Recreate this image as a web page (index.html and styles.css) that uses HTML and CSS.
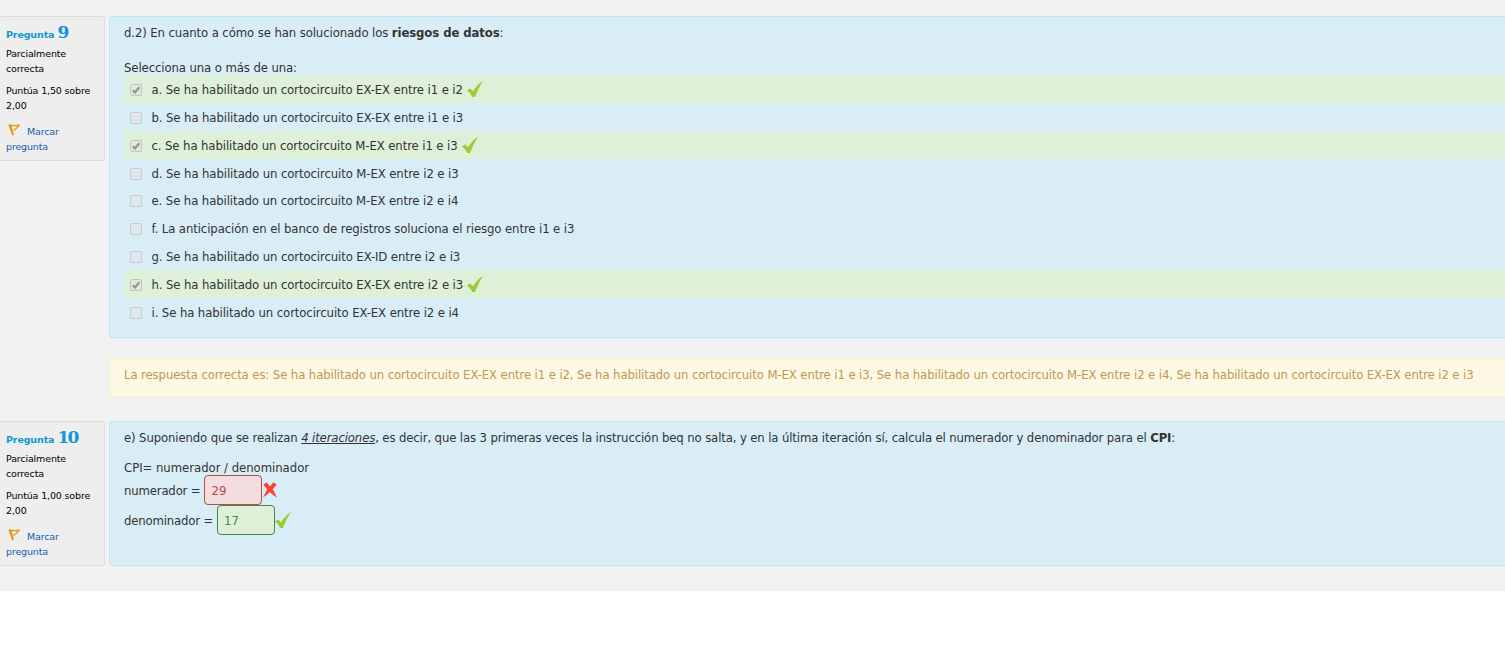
FILE: index.html
```html
<!DOCTYPE html>
<html lang="es">
<head>
<meta charset="utf-8">
<title>Revisión del cuestionario</title>
<link rel="stylesheet" href="styles.css">
</head>
<body>
<svg class="defs" width="0" height="0">
  <symbol id="tick" viewBox="0 0 16 16"><path d="M0 9.600 3 7.400 6.200 10.300Q10 3.500 15.900 0 11.500 6.500 7.900 15.900L5.500 15.900Q3.500 12 0 9.600Z" fill="#9c3"/></symbol>
  <symbol id="cross" viewBox="0 0 14 16"><path d="M.3 3 3.600.3 7 4.300 10.500.3 13.700 2.800 9.700 7.200Q12 10.500 13.800 15.700 10 13 6.800 10.200 3.800 12.700.1 15.500 2.200 10.800 4.300 7.300Z" fill="#ff4136"/></symbol>
  <symbol id="flag" viewBox="0 0 12 12"><path d="M.8 1 5.500 1.700 11 1.300 8.500 4.200 5.500 6.500M1 .8 4.800 11.300M3 1.800 5.300 11.200" fill="none" stroke="#e39a0c" stroke-width="1.300"/></symbol>
  <symbol id="mark" viewBox="0 0 10 10"><path d="M1.700 5.300 4 7.500 8.300 2.100" fill="none" stroke="#929892" stroke-width="2.200"/></symbol>
</svg>
<main class="page">
  <section class="question first">
    <aside class="info">
      <h3>Pregunta <span>9</span></h3>
      <p class="state">Parcialmente correcta</p>
      <p class="grade">Puntúa 1,50 sobre 2,00</p>
      <p class="mark"><svg class="flag"><use href="#flag"/></svg>Marcar pregunta</p>
    </aside>
    <div class="content">
      <div class="formulation">
        <p>d.2) En cuanto a cómo se han solucionado los <b>riesgos de datos</b>:</p>
        <p class="prompt">Selecciona una o más de una:</p>
        <ul class="answers">
          <li class="ok"><i class="box"><svg><use href="#mark"/></svg></i><span>a. Se ha habilitado un cortocircuito EX-EX entre i1 e i2</span><svg class="tick"><use href="#tick"/></svg></li>
          <li><i class="box"></i><span>b. Se ha habilitado un cortocircuito EX-EX entre i1 e i3</span></li>
          <li class="ok"><i class="box"><svg><use href="#mark"/></svg></i><span>c. Se ha habilitado un cortocircuito M-EX entre i1 e i3</span><svg class="tick"><use href="#tick"/></svg></li>
          <li><i class="box"></i><span>d. Se ha habilitado un cortocircuito M-EX entre i2 e i3</span></li>
          <li><i class="box"></i><span>e. Se ha habilitado un cortocircuito M-EX entre i2 e i4</span></li>
          <li><i class="box"></i><span>f. La anticipación en el banco de registros soluciona el riesgo entre i1 e i3</span></li>
          <li><i class="box"></i><span>g. Se ha habilitado un cortocircuito EX-ID entre i2 e i3</span></li>
          <li class="ok"><i class="box"><svg><use href="#mark"/></svg></i><span>h. Se ha habilitado un cortocircuito EX-EX entre i2 e i3</span><svg class="tick"><use href="#tick"/></svg></li>
          <li><i class="box"></i><span>i. Se ha habilitado un cortocircuito EX-EX entre i2 e i4</span></li>
        </ul>
      </div>
      <div class="outcome">La respuesta correcta es: Se ha habilitado un cortocircuito EX-EX entre i1 e i2, Se ha habilitado un cortocircuito M-EX entre i1 e i3, Se ha habilitado un cortocircuito M-EX entre i2 e i4, Se ha habilitado un cortocircuito EX-EX entre i2 e i3</div>
    </div>
  </section>
  <section class="question second">
    <aside class="info">
      <h3>Pregunta <span>10</span></h3>
      <p class="state">Parcialmente correcta</p>
      <p class="grade">Puntúa 1,00 sobre 2,00</p>
      <p class="mark"><svg class="flag"><use href="#flag"/></svg>Marcar pregunta</p>
    </aside>
    <div class="content">
      <div class="formulation">
        <p class="stem">e) Suponiendo que se realizan <em>4 iteraciones</em>, es decir, que las 3 primeras veces la instrucción beq no salta, y en la última iteración sí, calcula el numerador y denominador para el <b>CPI</b>:</p>
        <p class="formula">CPI= numerador / denominador</p>
        <div class="field"><label for="num">numerador =</label><input id="num" class="wrong" value="29" readonly><svg class="cross"><use href="#cross"/></svg></div>
        <div class="field"><label for="den">denominador =</label><input id="den" class="right" value="17" readonly><svg class="tick"><use href="#tick"/></svg></div>
      </div>
    </div>
  </section>
</main>
</body>
</html>
```
FILE: styles.css
```css
* { box-sizing: border-box; }
body { margin: 0; background: #fff; overflow: hidden; color: #333; letter-spacing: -.104px;
  font: 13px/20px "DejaVu Sans Condensed", "DejaVu Sans", sans-serif; font-stretch: condensed; }
p, h3, ul { margin: 0; padding: 0; }
.defs { position: absolute; }
.page { height: 591px; background: #f1f1f1; padding-top: 16px; white-space: nowrap; }
.question { display: flex; align-items: flex-start; gap: 4px; }
.first { height: 405px; }
.info { width: 106px; height: 145px; margin-left: -1px; padding: 6px 6px 0; background: #eee;
  border: 1px solid #dcdcdc; border-radius: 2px; color: #000; white-space: normal;
  font: 9.500px/15px "DejaVu Sans", sans-serif; font-stretch: normal; letter-spacing: -.15px; }
.info h3 { height: 20px; font-size: 9.500px; line-height: 20px; color: #0d98cf; letter-spacing: -.13px; white-space: nowrap; }
.info h3 span { font: bold 17px/18px "DejaVu Serif", serif; letter-spacing: -1.900px; }
.state { margin-top: 3px; }
.grade { margin-top: 7px; }
.mark { margin-top: 11px; color: #1560ac; }
.flag { width: 12px; height: 12px; margin: 0 7px 0 2px; vertical-align: -1px; }
.content { flex: 1; min-width: 0; }
.formulation { height: 322px; padding: 6px 0 0 14px; background: #d9edf7;
  border: 1px solid #bce8f1; border-right: 0; border-radius: 4px 0 0 4px; }
.prompt { height: 32px; padding-top: 15px; }
.answers { list-style: none; }
.answers li { display: flex; align-items: center; height: 27.860px; padding: 2px 0 0 6px; }
.ok { background: #dff0d8; }
.box { display: flex; width: 12px; height: 12px; margin-right: 9.500px; border: 1px solid #c5cdd1;
  border-radius: 2px; background: #dfe6ec; }
.ok .box { background: #e3e8df; border-color: #bfc6bc; }
.box svg { width: 10px; height: 10px; }
.tick { width: 16px; height: 16px; }
.answers .tick { margin: 0 0 2px 4px; }
.outcome { height: 39px; margin-top: 20px; padding: 6px 14px; line-height: 20px; color: #c09853;
  background: #fcf8e3; border: 1px solid #fbeed5; border-right: 0; border-radius: 4px 0 0 4px; }
.second .formulation { height: 145px; }
.stem { letter-spacing: -.13px; }
.second em { text-decoration: underline; }
.formula { margin-top: 10px; height: 17px; letter-spacing: -.04px; }
.field { display: flex; align-items: center; height: 30px; }
.field label { padding-top: 1px; letter-spacing: -.17px; }
.field input { width: 58px; height: 30px; margin-left: 4px; padding: 1px 6px 0; font: inherit;
  border: 1px solid; border-radius: 4px; outline: 0; }
.field .wrong { color: #b94a48; background: #f2dede; border-color: #b94a48; }
.field .right { color: #468847; background: #dff0d8; border-color: #468847; }
.cross { width: 14px; height: 16px; margin-left: 1px; }
```
